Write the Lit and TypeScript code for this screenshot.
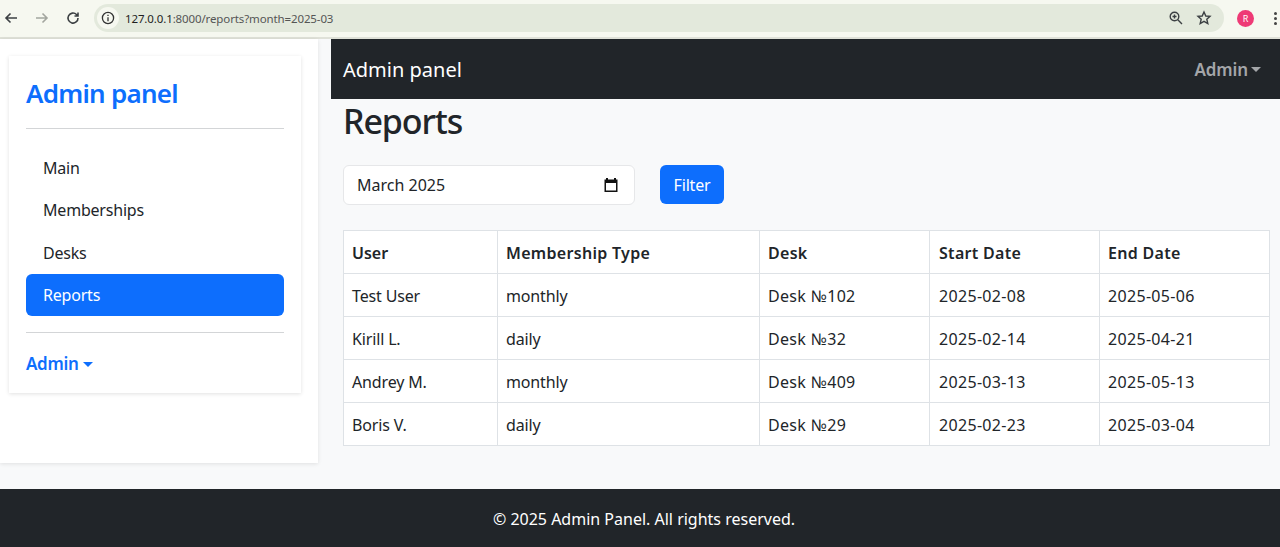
import { LitElement, html, css } from "lit";
import { customElement } from "lit/decorators.js";

const rows = [
  ["Test User", "monthly", "Desk №102", "2025-02-08", "2025-05-06"],
  ["Kirill L.", "daily", "Desk №32", "2025-02-14", "2025-04-21"],
  ["Andrey M.", "monthly", "Desk №409", "2025-03-13", "2025-05-13"],
  ["Boris V.", "daily", "Desk №29", "2025-02-23", "2025-03-04"],
];

@customElement("app-root")
export class AppRoot extends LitElement {
  static styles = css`
    :host { display: flex; flex-direction: column; width: 1280px; height: 547px; overflow: hidden; background: #f8f9fa; color: #212529; font-family: "Noto Sans", "Open Sans", sans-serif; font-size: 16px; letter-spacing: -0.2px; }
    .chrome { height: 39px; box-sizing: border-box; background: #f6f8f0; border-bottom: 2px solid #dfe1d8; display: flex; align-items: center; flex: none; padding-bottom: 1px; }
    .cicons { display: flex; align-items: center; width: 94px; flex: none; }
    .cicons svg { margin-left: 3px; width: 16px; height: 16px; }
    .cicons svg + svg { margin-left: 15px; }
    .omni { flex: none; width: 1130px; height: 28px; border-radius: 14px; background: #e3e9dc; display: flex; align-items: center; font-size: 11.5px; color: #3c4043; letter-spacing: -0.12px; }
    .info { width: 22px; height: 22px; margin: 0 6px 0 3px; border-radius: 50%; background: #f6f8f0; display: flex; align-items: center; justify-content: center; flex: none; }
    .url b { font-weight: 400; color: #1f1f1f; }
    .url { flex: 1; color: #555; }
    .omni svg.act { margin-right: 12px; }
    .avatar { width: 17px; height: 17px; border-radius: 50%; background: #ee3a76; color: #fff; font-size: 9px; display: flex; align-items: center; justify-content: center; margin-left: 13px; letter-spacing: 0; }
    .dots { margin-left: 20px; display: flex; flex-direction: column; gap: 2px; }
    .dots i { width: 3px; height: 3px; border-radius: 50%; background: #444; display: block; }
    .body { flex: 1; display: flex; min-height: 0; }
    aside { width: 318px; height: 424px; box-sizing: border-box; background: #fff; box-shadow: 0 1px 4px rgba(0,0,0,.1); padding: 17px 17px 0 9px; flex: none; }
    .card { background: #fff; box-shadow: 0 1px 4px rgba(0,0,0,.12); height: 337px; box-sizing: border-box; padding: 17px; }
    h2 { margin: 0; font-size: 26px; line-height: 40px; font-weight: 600; color: #0d6efd; letter-spacing: -0.75px; }
    hr { border: 0; border-top: 1px solid #d3d5d7; margin: 0; }
    .card > hr:first-of-type { margin: 15px 0 18px; }
    nav { display: flex; flex-direction: column; gap: 0.4px; }
    nav a { height: 42px; display: flex; align-items: center; padding: 0 17px; border-radius: 6px; color: #212529; }
    nav a.on { background: #0d6efd; color: #fff; }
    .card > hr.b { margin: 16px 0 19px; }
    .adm { color: #0d6efd; font-size: 17px; font-weight: 600; display: flex; align-items: center; gap: 4px; line-height: 24px; letter-spacing: -0.3px; }
    .caret { width: 0; height: 0; border-left: 5px solid transparent; border-right: 5px solid transparent; border-top: 5px solid currentColor; display: block; }
    .right { flex: 1; margin-left: 13px; min-width: 0; }
    .navbar { height: 60px; background: #212529; display: flex; align-items: center; justify-content: space-between; padding: 0 19px 0 12px; color: #fff; font-size: 20px; letter-spacing: 0; }
    .navbar .u { color: #a4a6a9; font-size: 17px; font-weight: 600; display: flex; align-items: center; gap: 3px; padding-top: 1px; letter-spacing: -0.1px; }
    main { padding: 0 10px 0 12px; }
    h1 { margin: 0; font-size: 34px; font-weight: 500; line-height: 44px; letter-spacing: -1.1px; }
    form { display: flex; align-items: flex-start; margin-top: 22px; gap: 25px; }
    .month { width: 292px; height: 40px; box-sizing: border-box; background: #fff; border: 1px solid #e6e7e9; border-radius: 6px; display: flex; align-items: center; justify-content: space-between; padding: 0 15px 0 13px; letter-spacing: 0; }
    button { width: 64px; height: 39px; border: 0; border-radius: 6px; background: #0d6efd; color: #fff; font: inherit; letter-spacing: inherit; padding: 0; }
    table { margin-top: 25px; width: 926px; border-collapse: collapse; table-layout: fixed; background: #fff; }
    th, td { border: 1px solid #dee2e6; height: 43px; box-sizing: border-box; padding: 1px 8px 0; text-align: left; font-weight: 400; }
    th { font-weight: 600; letter-spacing: 0.3px; }
    th:first-child { letter-spacing: 0; }
    td { letter-spacing: -0.15px; }
    td:nth-child(3) { letter-spacing: 0.3px; }
    td:nth-child(4), td:nth-child(5) { letter-spacing: 0.32px; }
    td:nth-child(4), th:nth-child(4) { padding-left: 9px; }
    footer { height: 58px; flex: none; background: #212529; color: #fff; display: flex; align-items: center; justify-content: center; letter-spacing: 0; padding-top: 2px; box-sizing: border-box; }
    footer span { margin-left: 8px; }
  `;

  render() {
    return html`
      <div class="chrome">
        <div class="cicons">
          <svg viewBox="0 0 16 16" fill="none" stroke="#3c4043" stroke-width="1.6"><path d="M14 8H3M7.5 3.5 3 8l4.5 4.5"/></svg>
          <svg viewBox="0 0 16 16" fill="none" stroke="#a3a69f" stroke-width="1.6"><path d="M2 8h11M8.5 3.5 13 8l-4.5 4.5"/></svg>
          <svg viewBox="0 0 16 16" fill="none" stroke="#3c4043" stroke-width="1.6"><path d="M13 8a5 5 0 1 1-1.5-3.5L13 6M13 2.5V6H9.5"/></svg>
        </div>
        <div class="omni">
          <span class="info"><svg width="14" height="14" viewBox="0 0 14 14" fill="none" stroke="#333" stroke-width="1.3"><circle cx="7" cy="7" r="5.6"/><path d="M7 6.2v4M7 3.7v1.3"/></svg></span>
          <span class="url"><b>127.0.0.1</b>:8000/reports?month=2025-03</span>
          <svg class="act" width="16" height="16" viewBox="0 0 16 16" fill="none" stroke="#3c4043" stroke-width="1.4"><circle cx="6.5" cy="6.5" r="4.3"/><path d="M9.8 9.8 14 14M4.5 6.5h4M6.5 4.5v4"/></svg>
          <svg class="act" width="16" height="16" viewBox="0 0 16 16" fill="none" stroke="#3c4043" stroke-width="1.4"><path d="m8 2 1.8 4 4.2.4-3.2 2.8 1 4.3L8 11.3l-3.8 2.2 1-4.3L2 6.4 6.2 6z"/></svg>
        </div>
        <span class="avatar">R</span>
        <span class="dots"><i></i><i></i><i></i></span>
      </div>
      <div class="body">
        <aside>
          <div class="card">
            <h2>Admin panel</h2>
            <hr />
            <nav>
              <a>Main</a><a>Memberships</a><a>Desks</a><a class="on">Reports</a>
            </nav>
            <hr class="b" />
            <div class="adm">Admin <span class="caret"></span></div>
          </div>
        </aside>
        <div class="right">
          <div class="navbar"><span>Admin panel</span><span class="u">Admin <span class="caret"></span></span></div>
          <main>
            <h1>Reports</h1>
            <form>
              <div class="month">
                <span>March 2025</span>
                <svg width="16" height="16" viewBox="0 0 16 16"><path fill="#111" d="M3 1h2v1.500h6V1h2v1.500h1.500V15h-13V2.500H3zM3 6v7.500h10V6z"/></svg>
              </div>
              <button type="button">Filter</button>
            </form>
            <table>
              <colgroup><col style="width:154px" /><col style="width:262px" /><col style="width:170px" /><col style="width:170px" /><col style="width:170px" /></colgroup>
              <thead><tr><th>User</th><th>Membership Type</th><th>Desk</th><th>Start Date</th><th>End Date</th></tr></thead>
              <tbody>${rows.map((r) => html`<tr>${r.map((c) => html`<td>${c}</td>`)}</tr>`)}</tbody>
            </table>
          </main>
        </div>
      </div>
      <footer><span>© 2025 Admin Panel. All rights reserved.</span></footer>
    `;
  }
}
